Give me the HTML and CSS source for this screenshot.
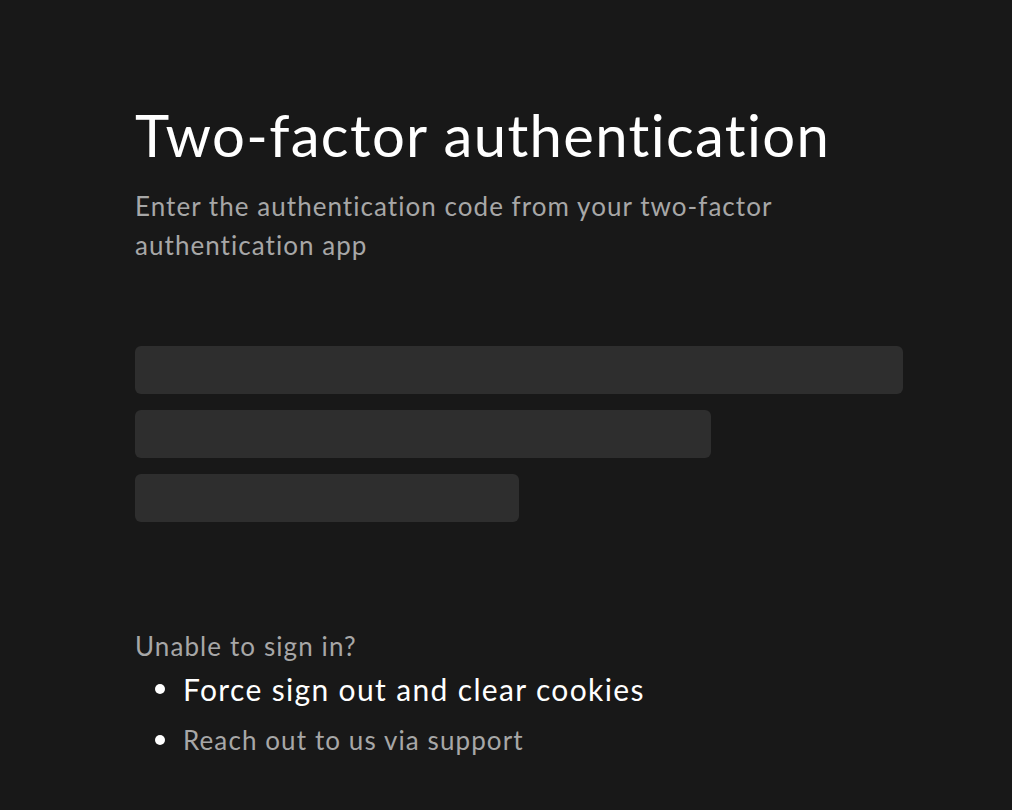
FILE: index.html
```html
<!DOCTYPE html>
<html lang="en">
<head>
<meta charset="utf-8">
<title>Two-factor authentication</title>
<link rel="stylesheet" href="styles.css">
</head>
<body>
<main class="page">
  <section class="auth">
    <h1 class="title">Two-factor authentication</h1>
    <p class="subtitle">Enter the authentication code from your two-factor authentication app</p>
    <div class="skeleton">
      <div class="bar bar-full"></div>
      <div class="bar bar-mid"></div>
      <div class="bar bar-short"></div>
    </div>
    <div class="help">
      <p class="help-title">Unable to sign in?</p>
      <ul class="help-list">
        <li class="help-item help-primary">Force sign out and clear cookies</li>
        <li class="help-item help-secondary">Reach out to us via support</li>
      </ul>
    </div>
  </section>
</main>
</body>
</html>
```

FILE: styles.css
```css
* { box-sizing: border-box; }
html, body {
  margin: 0;
  padding: 0;
  background: #181818;
  height: 100%;
}
body {
  font-family: "Lato", "Liberation Sans", sans-serif;
  font-variant-ligatures: none;
  color: #ffffff;
}
.page {
  padding: 100px 0 0 135px;
}
.auth {
  width: 768px;
}
.title {
  margin: 0;
  font-weight: 400;
  font-size: 58px;
  line-height: 70px;
  letter-spacing: 1.35px;
  color: #ffffff;
}
.subtitle {
  margin: 17px 0 0;
  width: 700px;
  font-size: 26px;
  line-height: 39px;
  letter-spacing: 1.05px;
  color: #a7a7a7;
}
.skeleton {
  margin-top: 81px;
  display: flex;
  flex-direction: column;
  gap: 16px;
}
.bar {
  height: 48px;
  border-radius: 6px;
  background: #2e2e2e;
}
.bar-full { width: 768px; }
.bar-mid { width: 576px; }
.bar-short { width: 384px; }
.help {
  margin-top: 106px;
}
.help-title {
  margin: 0;
  font-size: 26px;
  line-height: 36px;
  letter-spacing: 1.1px;
  color: #a7a7a7;
}
.help-list {
  list-style: none;
  margin: 3px 0 0;
  padding: 0 0 0 20px;
}
.help-item {
  display: flex;
  align-items: center;
  gap: 18px;
  margin: 0;
}
.help-item::before {
  content: "";
  flex: none;
  width: 10px;
  height: 10px;
  border-radius: 50%;
  background: #ffffff;
}
.help-primary {
  font-size: 30px;
  line-height: 44px;
  letter-spacing: 1.35px;
  color: #ffffff;
}
.help-secondary {
  margin-top: 3px;
  font-size: 26px;
  line-height: 52px;
  letter-spacing: 1.1px;
  color: #a7a7a7;
}
```
